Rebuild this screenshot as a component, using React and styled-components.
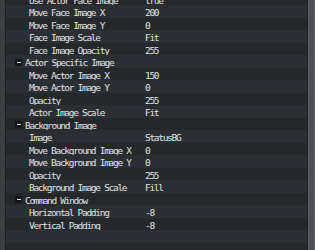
import React from "react";
import styled, { createGlobalStyle } from "styled-components";

const Global = createGlobalStyle`
  html, body {
    margin: 0;
    padding: 0;
    background: #24272a;
  }
`

const Panel = styled.div`
  display: flex;
  width: 315px;
  height: 250px;
  overflow: hidden;
  background: #24272a;
  font-family: "DejaVu Sans Mono", monospace;
  font-size: 9.5px;
  letter-spacing: -1.3px;
  color: #e2e2e2;
`
const Gutter = styled.div`
  width: 5px;
  flex: none;
  background: #3a3d41;
  border-right: 1px solid #1c1e20;
`
const List = styled.div`
  flex: 1;
  display: flex;
  flex-direction: column;
  margin-top: -7.5px;
`
const Row = styled.div`
  display: grid;
  grid-template-columns: ${p => p.header ? "10px 1fr" : "23px 116px 1fr"};
  align-items: center;
  height: 12.5px;
  flex: none;
  padding-left: ${p => p.header ? "9px" : "0"};
  background: ${p => p.odd ? "#2b2e32" : "#25282b"};
  line-height: 12px;
  padding-top: 2px;
  box-sizing: border-box;
  white-space: nowrap;
`
const Toggle = styled.span`
  width: 7px;
  height: 7px;
  background: #151719;
  display: flex;
  align-items: center;
  justify-content: center;
  margin-top: -2px;
  &::after {
    content: "";
    width: 4px;
    height: 1px;
    background: #e0e0e0;
  }
`
const Label = styled.span`
  grid-column: 2;
`
const Value = styled.span`
  grid-column: 3;
`
const Scrollbar = styled.div`
  width: 7px;
  flex: none;
  background: #4c4f53;
  border-left: 1px solid #1c1e20;
  box-shadow: inset 1px 0 0 #5d6064, inset -1px 0 0 #5d6064;
`

const rows = [
  ["Use Actor Face Image", "true"],
  ["Move Face Image X", "200"],
  ["Move Face Image Y", "0"],
  ["Face Image Scale", "Fit"],
  ["Face Image Opacity", "255"],
  ["Actor Specific Image"],
  ["Move Actor Image X", "150"],
  ["Move Actor Image Y", "0"],
  ["Opacity", "255"],
  ["Actor Image Scale", "Fit"],
  ["Background Image"],
  ["Image", "StatusBG"],
  ["Move Background Image X", "0"],
  ["Move Background Image Y", "0"],
  ["Opacity", "255"],
  ["Background Image Scale", "Fill"],
  ["Command Window"],
  ["Horizontal Padding", "-8"],
  ["Vertical Padding", "-8"],
  [""],
  [""],
]

export default function App() {
  return (
    <>
      <Global />
      <Panel>
        <Gutter />
        <List>
          {rows.map(([label, value], i) => {
            const header = value === undefined && label !== ""
            return (
              <Row key={i} odd={i % 2 === 1} header={header}>
                {header ? (
                  <>
                    <Toggle />
                    <Label>{label}</Label>
                  </>
                ) : (
                  <>
                    <Label>{label}</Label>
                    <Value>{value}</Value>
                  </>
                )}
              </Row>
            )
          })}
        </List>
        <Scrollbar />
      </Panel>
    </>
  )
}
